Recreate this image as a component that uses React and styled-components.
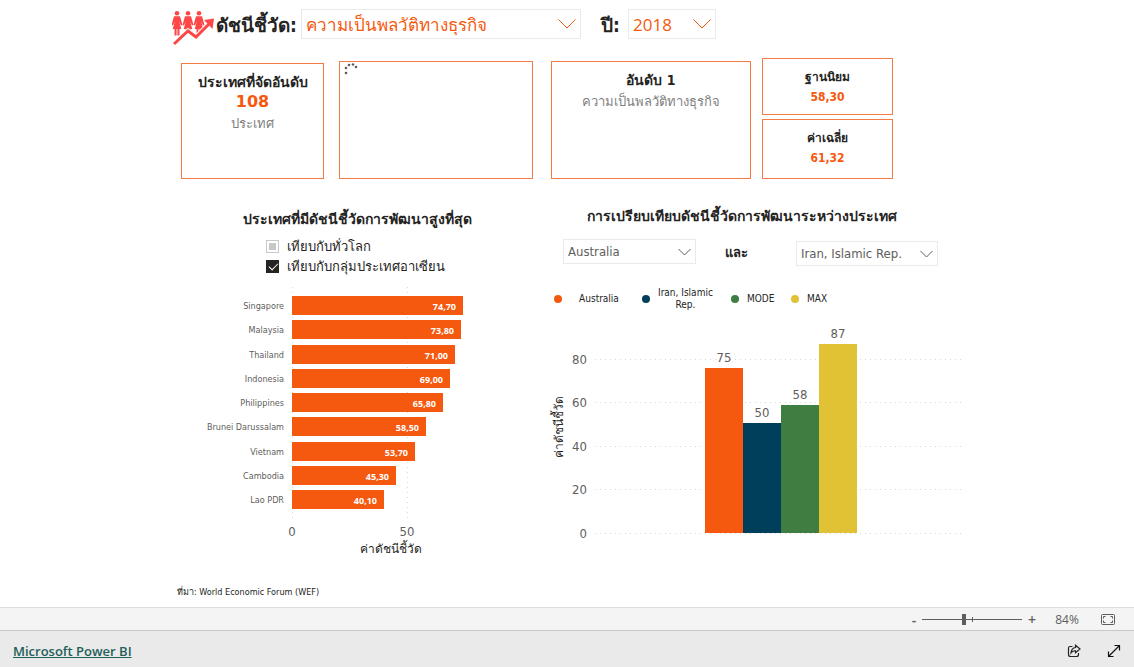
import React, { useState } from "react";
import styled, { createGlobalStyle, ThemeProvider } from "styled-components";

const theme = {
  color: {
    orange: "#f5590f",
    border: "#f47b43",
    navy: "#003f5c",
    green: "#3f7d40",
    yellow: "#e0c234",
    dark: "#252423",
    grey: "#605e5c",
    muted: "#7f7f7f",
    line: "#eaeaea",
    link: "#1f5f5b",
  },
  font: {
    base: '"DejaVu Sans Condensed", "DejaVu Sans", "Noto Sans", sans-serif',
    wide: '"DejaVu Sans", sans-serif',
    light: '"Open Sans", "Noto Sans", sans-serif',
  },
};

const GlobalStyle = createGlobalStyle`
  * {
    box-sizing: border-box;
  }
  body {
    margin: 0;
    background: #fff;
    font-family: ${theme.font.base};
    color: ${theme.color.dark};
  }
`;

const Page = styled.div`
  min-height: 100vh;
  display: flex;
  flex-direction: column;
`;
const Report = styled.main`
  flex: 1;
  width: 100%;
  max-width: 794px;
  margin: 0 auto;
  display: flex;
  flex-direction: column;
`;
const Header = styled.header`
  display: flex;
  align-items: flex-start;
  height: 58px;
  padding-top: 9px;
`;
const Logo = styled.svg`
  width: 44px;
  height: 38px;
  flex: none;
  margin-left: 2px;
`;
const FilterLabel = styled.label`
  width: ${({ $width }) => $width}px;
  flex: none;
  font-size: 19px;
  line-height: 32px;
  font-weight: bold;
  white-space: nowrap;
`;
const SelectBox = styled.div`
  position: relative;
  flex: none;
  width: ${({ $width }) => $width}px;
  margin-right: ${({ $space }) => $space || 0}px;
`;
const Select = styled.select`
  appearance: none;
  display: block;
  width: 100%;
  height: ${({ $large }) => ($large ? 30 : 25)}px;
  padding: 0 24px 0 4px;
  border: 1px solid ${({ theme }) => theme.color.line};
  border-radius: 0;
  background: #fff;
  color: ${({ theme, $large }) =>
    $large ? theme.color.orange : theme.color.grey};
  font-family: ${({ theme, $large }) =>
    $large ? theme.font.light : theme.font.base};
  font-size: ${({ $large }) => ($large ? 17 : 13)}px;
`;
const Arrow = styled.svg`
  position: absolute;
  top: 50%;
  right: 5px;
  width: ${({ $large }) => ($large ? 18 : 13)}px;
  height: 10px;
  transform: translateY(-50%);
  fill: none;
  stroke: ${({ theme, $large }) =>
    $large ? theme.color.orange : theme.color.grey};
  pointer-events: none;
`;

const Cards = styled.section`
  display: grid;
  grid-template-columns: 158fr 212fr 211fr 131fr;
  align-items: end;
  padding: 0 71px 0 11px;
`;
const Card = styled.article`
  height: ${({ $height }) => $height}px;
  margin-right: ${({ $space }) => $space || 0}px;
  padding-top: ${({ $top }) => $top || 8}px;
  border: 1px solid ${({ theme }) => theme.color.border};
  text-align: center;
`;
const CardStack = styled.div`
  display: grid;
  gap: 4px;
`;
const CardTitle = styled.h2`
  margin: 0;
  font-size: ${({ $small }) => ($small ? 12 : 14)}px;
  line-height: 20px;
  font-weight: bold;
`;
const CardNumber = styled.div`
  font-family: ${({ theme, $small }) =>
    $small ? theme.font.base : theme.font.wide};
  font-size: ${({ $small }) => ($small ? 12 : 16)}px;
  line-height: 20px;
  font-weight: bold;
  color: ${({ theme }) => theme.color.orange};
`;
const CardText = styled.div`
  font-size: 13px;
  line-height: 24px;
  color: ${({ theme }) => theme.color.muted};
`;
const Spinner = styled.svg`
  display: block;
  width: 14px;
  height: 14px;
  margin-left: 4px;
  fill: ${({ theme }) => theme.color.grey};
`;

const Panels = styled.div`
  display: grid;
  grid-template-columns: 375fr 419fr;
  padding-top: 25px;
`;
const Panel = styled.section`
  display: flex;
  flex-direction: column;
`;
const PanelTitle = styled.h2`
  margin: 0;
  padding-right: ${({ $right }) => $right || 0}px;
  font-size: 14px;
  line-height: ${({ $line }) => $line}px;
  font-weight: bold;
  text-align: center;
`;
const CheckList = styled.div`
  padding: 2px 0 0 96px;
`;
const CheckLabel = styled.label`
  display: flex;
  align-items: center;
  gap: 8px;
  height: 20px;
  font-size: 13px;
`;
const Check = styled.input`
  appearance: none;
  width: 13px;
  height: 13px;
  margin: 0;
  border: 1px solid #c8c8c8;
  background: #c8c8c8 content-box;
  padding: 2px;
  &:checked {
    border-color: ${({ theme }) => theme.color.dark};
    background: ${({ theme }) => theme.color.dark};
    padding: 0;
  }
  &:checked::before {
    content: "";
    display: block;
    width: 8px;
    height: 4px;
    margin: 2px;
    border: solid #fff;
    border-width: 0 0 1px 1px;
    transform: rotate(-45deg);
  }
`;
const Chart = styled.svg`
  display: block;
  width: 100%;
  height: auto;
  font-family: inherit;
`;
const AxisText = styled.text`
  font-size: ${({ $size }) => $size || 13}px;
  fill: ${({ theme, $dark }) => ($dark ? theme.color.dark : theme.color.grey)};
  text-anchor: ${({ $anchor }) => $anchor || "middle"};
`;
const BarValue = styled.text`
  font-family: ${({ theme }) => theme.font.light};
  font-size: 9px;
  font-weight: bold;
  fill: #fff;
  text-anchor: end;
`;
const GridLine = styled.line`
  stroke: #d8d8d8;
  stroke-width: 1;
  stroke-dasharray: 1 4;
`;

const CompareRow = styled.div`
  display: flex;
  align-items: flex-start;
  height: 27px;
  margin-top: 11px;
  padding-left: 18px;
`;
const SecondCountry = styled.div`
  padding-top: 2px;
`;
const And = styled.span`
  width: 100px;
  flex: none;
  padding-right: 19px;
  font-size: 13px;
  line-height: 27px;
  font-weight: bold;
  text-align: center;
`;
const Legend = styled.ul`
  display: flex;
  align-items: center;
  height: 26px;
  margin: 20px 0 0;
  padding: 0 0 0 9px;
  list-style: none;
  font-size: 10px;
  line-height: 12px;
  text-align: center;
`;
const LegendItem = styled.li`
  display: flex;
  align-items: center;
  gap: 8px;
  width: ${({ $width }) => $width}px;
`;
const Dot = styled.span`
  width: 8px;
  height: 8px;
  flex: none;
  border-radius: 50%;
  background: ${({ theme, $color }) => theme.color[$color]};
`;
const LegendText = styled.span`
  min-width: ${({ $width }) => $width || 0}px;
`;
const Source = styled.p`
  margin: auto 0 7px 7px;
  font-size: 9px;
  line-height: 16px;
`;

const StatusBar = styled.div`
  display: flex;
  align-items: center;
  justify-content: flex-end;
  height: 24px;
  padding-right: 19px;
  border-top: 1px solid #dedede;
  border-bottom: 1px solid #c8c8c8;
  background: #f4f4f4;
  font-family: ${({ theme }) => theme.font.light};
  font-size: 12px;
  color: ${({ theme }) => theme.color.grey};
`;
const ToolButton = styled.button`
  display: flex;
  align-items: center;
  justify-content: center;
  width: ${({ $width }) => $width || 16}px;
  height: 20px;
  padding: 0;
  border: 0;
  background: none;
  color: inherit;
  font: inherit;
  font-size: 14px;
  font-weight: 600;
`;
const Zoom = styled.input`
  appearance: none;
  width: 100px;
  height: 13px;
  margin: 0 2px 0 0;
  background:
    linear-gradient(#605e5c, #605e5c) 50px 4px / 1px 5px no-repeat,
    linear-gradient(#605e5c, #605e5c) 0 6px / 100% 1px no-repeat;
  &::-webkit-slider-thumb {
    appearance: none;
    width: 4px;
    height: 11px;
    background: ${({ theme }) => theme.color.grey};
  }
`;
const Percent = styled.span`
  width: 61px;
  padding-right: 7px;
  text-align: center;
`;
const Footer = styled.footer`
  display: flex;
  align-items: center;
  gap: 24px;
  height: 36px;
  padding: 4px 12px 0 13px;
  background: #eaeaea;
`;
const FooterLink = styled.a`
  margin-right: auto;
  font-family: ${({ theme }) => theme.font.light};
  font-size: 13px;
  font-weight: 600;
  color: ${({ theme }) => theme.color.link};
`;

const countries = [
  ["Singapore", 74.7],
  ["Malaysia", 73.8],
  ["Thailand", 71],
  ["Indonesia", 69],
  ["Philippines", 65.8],
  ["Brunei Darussalam", 58.5],
  ["Vietnam", 53.7],
  ["Cambodia", 45.3],
  ["Lao PDR", 40.1],
];

const columns = [
  [75, 165, "orange"],
  [50, 110, "navy"],
  [58, 128, "green"],
  [87, 189, "yellow"],
];

const format = (value) => value.toFixed(2).replace(".", ",");

const Dropdown = ({ id, label, options, width, space, large }) => (
  <SelectBox $width={width} $space={space}>
    <Select id={id} aria-label={label} $large={large}>
      {options.map((option) => (
        <option key={option}>{option}</option>
      ))}
    </Select>
    <Arrow $large={large} viewBox={large ? "0 0 18 10" : "0 0 13 10"}>
      <path d={large ? "M.5 .5 9 9 17.5 .5" : "M.5 2 6.5 8 12.5 2"} />
    </Arrow>
  </SelectBox>
);

const LogoIcon = () => (
  <Logo viewBox="0 0 44 38" fill="#fd4747">
    {[5, 16, 27].map((x) => (
      <g key={x} transform={`translate(${x} 2)`}>
        <circle cx="0" cy="2.300" r="2.300" />
        <path d="M-3 5.300H3L5.500 14 4 14.600 2.200 10.500 4.300 18H2.500V24.500H.4V18H-.4V24.500H-2.500V18H-4.300L-2.200 10.500-4 14.600-5.500 14Z" />
      </g>
    ))}
    <path d="M1 38 2 34 16 22 24 28 38 14 38 38Z" fill="#fff" stroke="#fff" strokeWidth="5" />
    <path d="M2 35 16 22 24 28 38 14" fill="none" stroke="#fd4747" strokeWidth="3" />
    <path d="M32 11 42 9.500 40.500 20Z" />
  </Logo>
);

const RankingChart = () => (
  <Chart viewBox="0 0 375 290" role="img" aria-label="ค่าดัชนีชี้วัด">
    <GridLine x1="122.500" x2="122.500" y1="11" y2="244" />
    <GridLine x1="237.500" x2="237.500" y1="11" y2="244" />
    {countries.map(([name, value], i) => {
      const y = Math.round(20 + i * 24.25);
      const width = Math.round(value * 2.29);
      return (
        <g key={name}>
          <AxisText x="114" y={y + 13} $size={9} $anchor="end">
            {name}
          </AxisText>
          <rect x="122" y={y} width={width} height="19" fill={theme.color.orange} />
          <BarValue x={115 + width} y={y + 14}>
            {format(value)}
          </BarValue>
        </g>
      );
    })}
    <AxisText x="122" y="260">0</AxisText>
    <AxisText x="237" y="260">50</AxisText>
    <AxisText x="221" y="277" $size={12} $dark>
      ค่าดัชนีชี้วัด
    </AxisText>
  </Chart>
);

const CompareChart = () => (
  <Chart viewBox="0 0 419 240" role="img" aria-label="ค่าดัชนีชี้วัด">
    {[0, 20, 40, 60, 80].map((tick) => {
      const y = Math.round(221 - tick * 2.18);
      return (
        <g key={tick}>
          <GridLine x1="50" x2="419" y1={y + 0.5} y2={y + 0.5} />
          <AxisText x="42" y={y + 5} $anchor="end">
            {tick}
          </AxisText>
        </g>
      );
    })}
    {columns.map(([value, height, color], i) => (
      <g key={value}>
        <rect
          x={160 + i * 38}
          y={221 - height}
          width="38"
          height={height}
          fill={theme.color[color]}
        />
        <AxisText x={179 + i * 38} y={215 - height}>
          {value}
        </AxisText>
      </g>
    ))}
    <AxisText transform="translate(18 115) rotate(-90)" $size={12} $dark>
      ค่าดัชนีชี้วัด
    </AxisText>
  </Chart>
);

const App = () => {
  const [world, setWorld] = useState(false);
  const [asean, setAsean] = useState(true);
  const [zoom, setZoom] = useState(42);

  return (
    <ThemeProvider theme={theme}>
      <GlobalStyle />
      <Page>
        <Report>
          <Header>
            <LogoIcon />
            <FilterLabel htmlFor="index" $width={85}>
              ดัชนีชี้วัด:
            </FilterLabel>
            <Dropdown
              id="index"
              width={280}
              space={20}
              large
              options={["ความเป็นพลวัติทางธุรกิจ"]}
            />
            <FilterLabel htmlFor="year" $width={27}>
              ปี:
            </FilterLabel>
            <Dropdown id="year" width={88} large options={["2018"]} />
          </Header>

          <Cards>
            <Card $height={116} $space={15}>
              <CardTitle>ประเทศที่จัดอันดับ</CardTitle>
              <CardNumber>108</CardNumber>
              <CardText>ประเทศ</CardText>
            </Card>
            <Card $height={118} $space={18} $top={1}>
              <Spinner viewBox="0 0 14 14">
                <circle cx="2" cy="10" r="1.300" />
                <circle cx="2" cy="5" r="1.300" />
                <circle cx="5" cy="2" r="1.300" />
                <circle cx="9" cy="1.500" r="1.300" />
                <circle cx="12" cy="4" r="1.300" />
              </Spinner>
            </Card>
            <Card $height={118} $space={11}>
              <CardTitle>อันดับ 1</CardTitle>
              <CardText>ความเป็นพลวัติทางธุรกิจ</CardText>
            </Card>
            <CardStack>
              <Card $height={57}>
                <CardTitle $small>ฐานนิยม</CardTitle>
                <CardNumber $small>58,30</CardNumber>
              </Card>
              <Card $height={60}>
                <CardTitle $small>ค่าเฉลี่ย</CardTitle>
                <CardNumber $small>61,32</CardNumber>
              </Card>
            </CardStack>
          </Cards>

          <Panels>
            <Panel>
              <PanelTitle $line={30}>ประเทศที่มีดัชนีชี้วัดการพัฒนาสูงที่สุด</PanelTitle>
              <CheckList>
                <CheckLabel>
                  <Check
                    type="checkbox"
                    checked={world}
                    onChange={() => setWorld(!world)}
                  />
                  เทียบกับทั่วโลก
                </CheckLabel>
                <CheckLabel>
                  <Check
                    type="checkbox"
                    checked={asean}
                    onChange={() => setAsean(!asean)}
                  />
                  เทียบกับกลุ่มประเทศอาเซียน
                </CheckLabel>
              </CheckList>
              <RankingChart />
            </Panel>
            <Panel>
              <PanelTitle $line={24} $right={26}>
                การเปรียบเทียบดัชนีชี้วัดการพัฒนาระหว่างประเทศ
              </PanelTitle>
              <CompareRow>
                <Dropdown label="ประเทศแรก" width={133} options={["Australia"]} />
                <And>และ</And>
                <SecondCountry>
                  <Dropdown
                    label="ประเทศที่สอง"
                    width={142}
                    options={["Iran, Islamic Rep."]}
                  />
                </SecondCountry>
              </CompareRow>
              <Legend>
                <LegendItem $width={88}>
                  <Dot $color="orange" />
                  <LegendText $width={58}>Australia</LegendText>
                </LegendItem>
                <LegendItem $width={89}>
                  <Dot $color="navy" />
                  <LegendText>
                    Iran, Islamic
                    <br />
                    Rep.
                  </LegendText>
                </LegendItem>
                <LegendItem $width={60}>
                  <Dot $color="green" />
                  <LegendText>MODE</LegendText>
                </LegendItem>
                <LegendItem $width={60}>
                  <Dot $color="yellow" />
                  <LegendText>MAX</LegendText>
                </LegendItem>
              </Legend>
              <CompareChart />
            </Panel>
          </Panels>
          <Source>ที่มา: World Economic Forum (WEF)</Source>
        </Report>

        <StatusBar>
          <ToolButton aria-label="Zoom out">-</ToolButton>
          <Zoom
            type="range"
            aria-label="Zoom"
            value={zoom}
            onChange={(e) => setZoom(e.target.value)}
          />
          <ToolButton aria-label="Zoom in">+</ToolButton>
          <Percent>84%</Percent>
          <ToolButton aria-label="Fit to page" $width={14}>
            <svg width="14" height="11" viewBox="0 0 14 11" fill="none" stroke="#605e5c">
              <rect x=".5" y=".5" width="13" height="10" rx="1" />
              <path d="M2.500 4.500V2.500H4.500M9.500 2.500H11.500V4.500M11.500 6.500V8.500H9.500M4.500 8.500H2.500V6.500" />
            </svg>
          </ToolButton>
        </StatusBar>
        <Footer>
          <FooterLink href="#">Microsoft Power BI</FooterLink>
          <ToolButton aria-label="Share">
            <svg width="14" height="14" viewBox="0 0 14 14" fill="none" stroke="#252423" strokeWidth="1.200">
              <path d="M5.500 2.500H3Q1.500 2.500 1.500 4V10.500Q1.500 12.500 3.500 12.500H9.500Q11.500 12.500 11.500 10.500V9" />
              <path d="M8.500 1.200 13 5 8.500 8.800V6.800Q6 6.500 4 9 4.500 4 8.500 3.500Z" />
            </svg>
          </ToolButton>
          <ToolButton aria-label="Full screen">
            <svg width="14" height="14" viewBox="0 0 14 14" fill="none" stroke="#111" strokeWidth="1.200">
              <path d="M1.500 12.500 12.500 1.500M7.500 1.500H12.500V6.500M1.500 7.500V12.500H6.500" />
            </svg>
          </ToolButton>
        </Footer>
      </Page>
    </ThemeProvider>
  );
};

export default App;
